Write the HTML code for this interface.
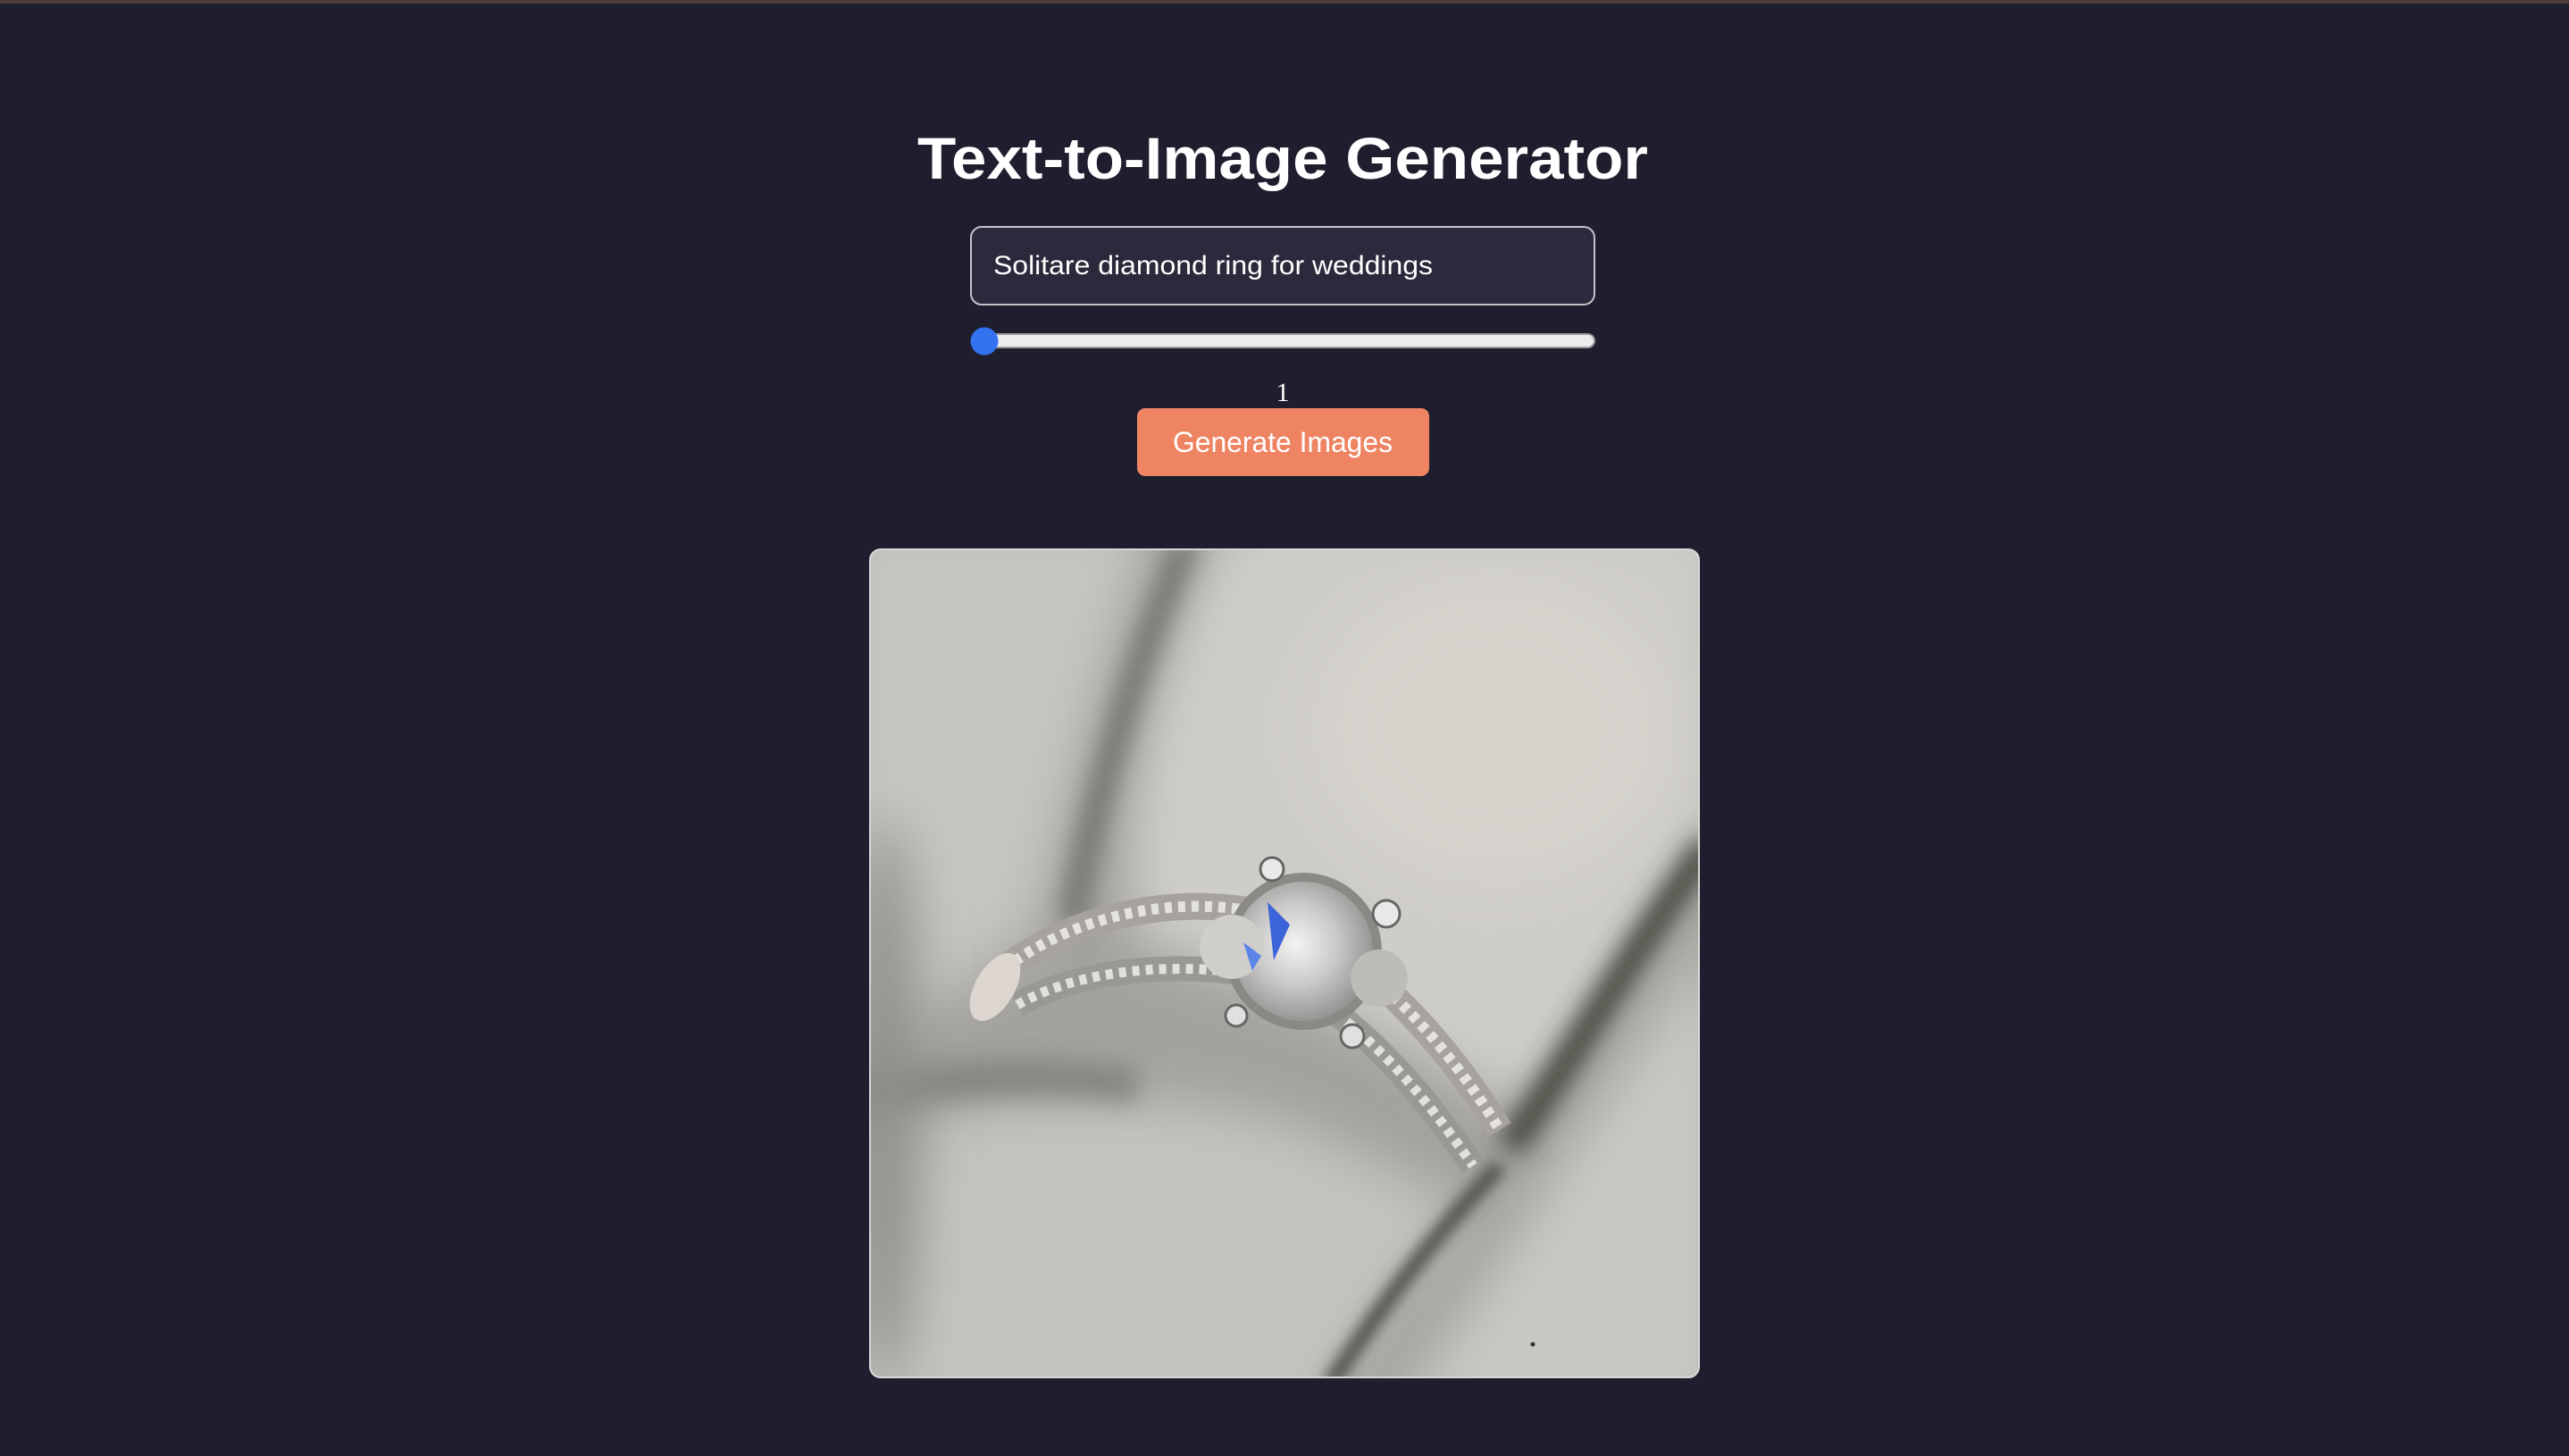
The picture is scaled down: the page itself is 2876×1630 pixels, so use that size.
<!DOCTYPE html>
<html><head><meta charset="utf-8"><style>
html,body{margin:0;padding:0;width:2876px;height:1630px;overflow:hidden;background:#1e1e2f;}
.bar{position:absolute;left:0;top:0;width:2876px;height:4px;background:#4c3a3c;}
svg{position:absolute;left:0;top:0;}
</style></head><body>
<div class="bar"></div>
<svg width="2876" height="1630" viewBox="0 0 2876 1630" xmlns="http://www.w3.org/2000/svg">
<defs>
<filter id="b8" filterUnits="userSpaceOnUse" x="-300" y="-300" width="1600" height="1600"><feGaussianBlur stdDeviation="8"/></filter>
<filter id="b14" filterUnits="userSpaceOnUse" x="-300" y="-300" width="1600" height="1600"><feGaussianBlur stdDeviation="14"/></filter>
<filter id="b30" filterUnits="userSpaceOnUse" x="-300" y="-300" width="1600" height="1600"><feGaussianBlur stdDeviation="30"/></filter>
<clipPath id="ic"><rect x="974" y="615" width="928" height="927" rx="12"/></clipPath>
<radialGradient id="dia" cx="0.45" cy="0.45" r="0.6"><stop offset="0" stop-color="#f4f4f2"/><stop offset="0.5" stop-color="#c9c8c6"/><stop offset="1" stop-color="#8d8c8a"/></radialGradient>
</defs>
<text x="1436" y="200" text-anchor="middle" textLength="818" lengthAdjust="spacingAndGlyphs" font-family="Liberation Sans, sans-serif" font-weight="bold" font-size="66" fill="#ffffff">Text-to-Image Generator</text>
<rect x="1087" y="254" width="698" height="87" rx="12" fill="#2a2a3c" stroke="#c4c4c8" stroke-width="2"/>
<text x="1112" y="307" textLength="492" lengthAdjust="spacingAndGlyphs" font-family="Liberation Sans, sans-serif" font-size="30" fill="#ffffff">Solitare diamond ring for weddings</text>
<rect x="1088" y="374" width="697" height="15" rx="7.5" fill="#ececec" stroke="#9a9a9a" stroke-width="2"/>
<circle cx="1102" cy="382" r="15.5" fill="#3473f0"/>
<text x="1436" y="449" text-anchor="middle" font-family="Liberation Serif, serif" font-size="30" fill="#ffffff">1</text>
<rect x="1273" y="457" width="327" height="76" rx="9" fill="#ee8462"/>
<text x="1436" y="506" text-anchor="middle" textLength="246" lengthAdjust="spacingAndGlyphs" font-family="Liberation Sans, sans-serif" font-size="32" fill="#ffffff">Generate Images</text>
<g clip-path="url(#ic)">
<g transform="translate(974,615)">
<rect width="928" height="927" fill="#a3a29c"/>
<path d="M-40,-40 L320,-40 C270,120 220,280 190,420 C120,480 40,540 -40,580 Z" fill="#c6c5bf" filter="url(#b30)"/>
<path d="M400,-40 L960,-40 L960,300 C850,460 780,580 720,630 C620,560 500,500 300,440 C270,300 320,120 400,-40 Z" fill="#cfcdc7" filter="url(#b30)"/>
<ellipse cx="700" cy="200" rx="200" ry="170" fill="#d6d3cd" filter="url(#b30)"/>
<path d="M-40,660 C120,610 300,600 460,640 C560,680 640,720 670,740 C600,820 540,900 500,980 L-40,980 Z" fill="#c4c3bd" filter="url(#b30)"/>
<path d="M740,740 C800,640 880,520 960,420 L960,980 L580,980 C630,900 690,820 740,740 Z" fill="#c9c8c2" filter="url(#b30)"/>
<path d="M355,-10 C300,120 255,260 225,420" stroke="#6e6d68" stroke-width="26" fill="none" filter="url(#b14)"/>
<path d="M940,330 C840,470 780,580 715,670" stroke="#3c3c39" stroke-width="30" fill="none" filter="url(#b14)"/>
<path d="M-20,610 C100,590 200,585 300,600" stroke="#85847f" stroke-width="40" fill="none" filter="url(#b14)"/>
<path d="M705,690 C630,770 570,850 515,935" stroke="#4f4e4a" stroke-width="18" fill="none" filter="url(#b8)"/>
<ellipse cx="15" cy="620" rx="40" ry="320" fill="#8f8e89" filter="url(#b30)"/>
<path d="M150,470 C240,400 380,380 480,420 C570,470 650,560 705,650" stroke="#a6a39e" stroke-width="30" fill="none"/>
<path d="M150,470 C240,400 380,380 480,420 C570,470 650,560 705,650" stroke="#e4e2de" stroke-width="12" fill="none" stroke-dasharray="8 7"/>
<path d="M165,510 C250,460 400,460 480,490 C560,540 620,610 675,690" stroke="#9a9893" stroke-width="28" fill="none"/>
<path d="M165,510 C250,460 400,460 480,490 C560,540 620,610 675,690" stroke="#e2e0dc" stroke-width="11" fill="none" stroke-dasharray="8 7"/>
<ellipse cx="140" cy="490" rx="22" ry="42" fill="#ddd6d0" transform="rotate(30 140 490)"/>
<circle cx="485" cy="450" r="88" fill="#8a8986"/>
<circle cx="485" cy="450" r="78" fill="url(#dia)"/>
<circle cx="405" cy="445" r="36" fill="#cfcecb"/>
<circle cx="570" cy="480" r="32" fill="#bdbcb9"/>
<path d="M445,395 L470,420 L452,460 Z" fill="#3a64d8"/>
<path d="M418,440 L438,455 L428,472 Z" fill="#5b86e8"/>
<circle cx="450" cy="358" r="13" fill="#e8e8e6" stroke="#666" stroke-width="3"/>
<circle cx="578" cy="408" r="15" fill="#e8e8e6" stroke="#666" stroke-width="3"/>
<circle cx="540" cy="545" r="13" fill="#e0e0de" stroke="#666" stroke-width="3"/>
<circle cx="410" cy="522" r="12" fill="#e0e0de" stroke="#666" stroke-width="3"/>
<circle cx="742" cy="890" r="2.5" fill="#333"/>
</g>
</g>
<rect x="974" y="615" width="928" height="927" rx="12" fill="none" stroke="#d8d8dc" stroke-width="2"/>
</svg>
</body></html>
